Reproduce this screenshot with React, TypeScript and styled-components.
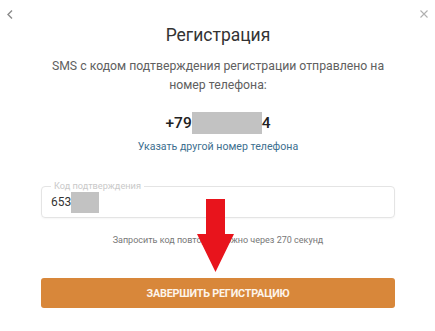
import styled, { createGlobalStyle } from "styled-components";

const GlobalStyle = createGlobalStyle`
  html, body {
    margin: 0;
    padding: 0;
    background: #fff;
  }
  body {
    font-family: Roboto, "Liberation Sans", Arial, sans-serif;
  }
`;

const Modal = styled.div`
  position: relative;
  width: 435px;
  height: 331px;
  background: #fff;
  display: flex;
  flex-direction: column;
`;

const TopBar = styled.div`
  display: flex;
  justify-content: space-between;
  align-items: flex-start;
  padding: 10px 7px 0 7px;
  height: 13px;
`;

const IconButton = styled.button`
  background: none;
  border: none;
  padding: 0;
  cursor: pointer;
  display: flex;
  line-height: 0;
`;

const Content = styled.div`
  display: flex;
  flex-direction: column;
  align-items: center;
  padding: 0 40px 0 41px;
`;

const Title = styled.h2`
  margin: 0;
  font-size: 17.5px;
  line-height: 24px;
  font-weight: 400;
  color: #333;
`;

const Subtitle = styled.p`
  margin: 10px 0 0;
  font-size: 12.25px;
  line-height: 19px;
  color: #606060;
  text-align: center;
`;

const Phone = styled.div`
  margin-top: 17px;
  display: flex;
  align-items: center;
  height: 22px;
  font-size: 15.5px;
  font-weight: 500;
  color: #222;
`;

const Redacted = styled.span<{ $w: number; $h: number }>`
  display: inline-block;
  width: ${(p) => p.$w}px;
  height: ${(p) => p.$h}px;
  background: #c2c2c2;
`;

const ChangeLink = styled.a`
  margin-top: 5px;
  font-size: 10.6px;
  line-height: 16px;
  color: #3d6f8f;
  text-decoration: none;
  cursor: pointer;
`;

const Field = styled.div`
  position: relative;
  align-self: stretch;
  margin-top: 31px;
  height: 30px;
  border: 1px solid #e4e4e4;
  border-radius: 4px;
  display: flex;
  align-items: center;
  padding-left: 9px;
  box-shadow: 0 1px 2px rgba(0, 0, 0, 0.04);
`;

const FieldLabel = styled.span`
  position: absolute;
  top: -7px;
  left: 9px;
  padding: 0 3px;
  background: #fff;
  font-size: 9.2px;
  line-height: 12px;
  color: #c9c9c9;
`;

const FieldValue = styled.span`
  font-size: 12px;
  color: #333;
  display: flex;
  align-items: center;
`;

const Hint = styled.p`
  margin: 15px 0 0;
  font-size: 9px;
  line-height: 14px;
  color: #777;
`;

const SubmitButton = styled.button`
  align-self: stretch;
  margin-top: 31px;
  height: 30px;
  border: none;
  border-radius: 3px;
  background: #d8873a;
  color: #fdf4ea;
  font-family: Roboto, "Liberation Sans", Arial, sans-serif;
  font-size: 10.8px;
  font-weight: 700;
  letter-spacing: -0.2px;
  text-transform: uppercase;
  cursor: pointer;
`;

const Arrow = styled.svg`
  position: absolute;
  left: 196px;
  top: 199px;
  pointer-events: none;
`;

export default function App() {
  return (
    <>
      <GlobalStyle />
      <Modal>
        <TopBar>
          <IconButton title="Назад">
            <svg width="6" height="9" viewBox="0 0 6 9">
              <path d="M5 0.5 L1 4.5 L5 8.5" fill="none" stroke="#8a8a8a" strokeWidth="1.4" />
            </svg>
          </IconButton>
          <IconButton title="Закрыть">
            <svg width="8" height="8" viewBox="0 0 8 8">
              <path d="M0.5 0.5 L7.5 7.5 M7.5 0.5 L0.5 7.5" fill="none" stroke="#b0b0b0" strokeWidth="1.1" />
            </svg>
          </IconButton>
        </TopBar>
        <Content>
          <Title>Регистрация</Title>
          <Subtitle>
            SMS с кодом подтверждения регистрации отправлено на
            <br />
            номер телефона:
          </Subtitle>
          <Phone>
            +79
            <Redacted $w={70} $h={22} />
            4
          </Phone>
          <ChangeLink>Указать другой номер телефона</ChangeLink>
          <Field>
            <FieldLabel>Код подтверждения</FieldLabel>
            <FieldValue>
              653
              <Redacted $w={28} $h={22} />
            </FieldValue>
          </Field>
          <Hint>Запросить код повторно можно через 270 секунд</Hint>
          <SubmitButton>Завершить регистрацию</SubmitButton>
        </Content>
        <Arrow width="40" height="76" viewBox="0 0 40 76">
          <path d="M10 0 H29 V35 H38 L19.5 73 L1 35 H10 Z" fill="#e8141c" />
        </Arrow>
      </Modal>
    </>
  );
}
